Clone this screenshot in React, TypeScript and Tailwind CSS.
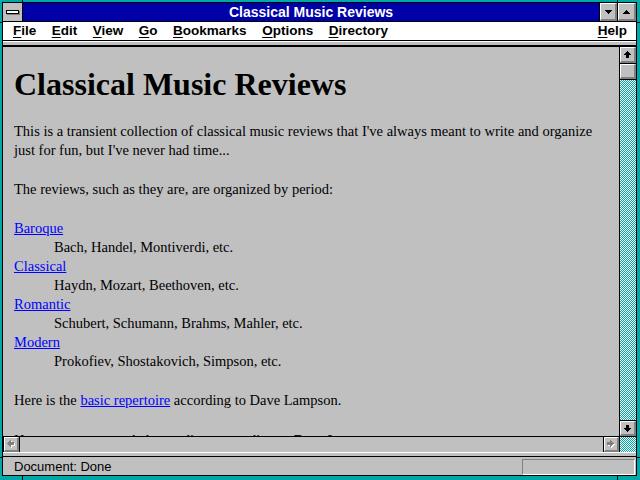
import React from "react";

function Bevel({ className = "", children }: { className?: string; children?: React.ReactNode }) {
  return (
    <div
      className={`flex items-center justify-center bg-[#c0c0c0] border-t border-l border-t-white border-l-white border-r-2 border-b-2 border-r-[#808080] border-b-[#808080] ${className}`}
    >
      {children}
    </div>
  );
}

function Px({ d, w = 7, h = 7, fill = "#000" }: { d: string; w?: number; h?: number; fill?: string }) {
  return (
    <svg width={w} height={h} viewBox={`0 0 ${w} ${h}`} shapeRendering="crispEdges" className="block">
      <path d={d} fill={fill} />
    </svg>
  );
}

function Disabled({ d }: { d: string }) {
  return (
    <svg width={8} height={8} viewBox="0 0 8 8" shapeRendering="crispEdges" className="block">
      <path d={d} fill="#ffffff" transform="translate(1,1)" />
      <path d={d} fill="#808080" />
    </svg>
  );
}

const dither =
  "bg-white bg-[image:conic-gradient(#00a8a8_25%,#ffffff_0_50%,#00a8a8_0_75%,#ffffff_0)] bg-[length:2px_2px]";

const UP = "M3 0H4V1H5V2H6V3H7V4H5V7H2V4H0V3H1V2H2V1H3Z";
const DOWN = "M2 0H5V3H7V4H6V5H5V6H4V7H3V6H2V5H1V4H0V3H2Z";
const LEFT = "M0 3V4H1V5H2V6H3V7H4V5H7V2H4V0H3V1H2V2H1V3Z";
const RIGHT = "M7 3V4H6V5H5V6H4V7H3V5H0V2H3V0H4V1H5V2H6V3Z";
const TRI_DOWN = "M0 0H7V1H6V2H5V3H4V4H3V3H2V2H1V1H0Z";
const TRI_UP = "M3 0H4V1H5V2H6V3H7V4H0V3H1V2H2V1H3Z";

function MenuItem({ first, rest }: { first: string; rest: string }) {
  return (
    <span>
      <span className="underline decoration-1 underline-offset-[2px]">{first}</span>
      {rest}
    </span>
  );
}

export default function App() {
  return (
    <div className="relative w-[640px] h-[480px] bg-[#00a8a8] pt-[2px] pl-[2px] pr-[3px] pb-[4px] overflow-hidden">
      {/* frame corner notches */}
      <div className="absolute left-[22px] top-0 w-px h-[2px] bg-black" />
      <div className="absolute left-[617px] top-0 w-px h-[2px] bg-black" />
      <div className="absolute left-[22px] bottom-0 w-px h-[4px] bg-black" />
      <div className="absolute left-[617px] bottom-0 w-px h-[4px] bg-black" />
      <div className="absolute left-0 top-[22px] w-[2px] h-px bg-black" />
      <div className="absolute right-0 top-[22px] w-[3px] h-px bg-black" />
      <div className="absolute left-0 top-[457px] w-[2px] h-px bg-black" />
      <div className="absolute right-0 top-[457px] w-[3px] h-px bg-black" />

      <div className="h-full border border-black flex flex-col bg-[#c0c0c0]">
        {/* Title bar */}
        <div className="h-[19px] shrink-0 flex border-b border-black">
          <div className="w-[20px] border-r border-black bg-[#c0c0c0] flex items-center justify-center">
            <div className="w-[13px] h-[4px] border border-black bg-white shadow-[1px_1px_0_#808080]" />
          </div>
          <div className="flex-1 bg-[#0000a8] text-white font-bold text-[14px] leading-none font-['Liberation_Sans',Arial,sans-serif] flex items-center justify-center">
            Classical Music Reviews
          </div>
          <div className="w-[18px] border-l border-black flex">
            <Bevel className="flex-1">
              <Px d={TRI_DOWN} w={7} h={4} />
            </Bevel>
          </div>
          <div className="w-[19px] border-l border-black flex">
            <Bevel className="flex-1">
              <Px d={TRI_UP} w={7} h={4} />
            </Bevel>
          </div>
        </div>

        {/* Menu bar */}
        <div className="h-[19px] shrink-0 bg-white border-b border-black flex items-center pl-[10px] pr-[9px] gap-[15.5px] font-['Liberation_Sans',Arial,sans-serif] font-bold text-[13.5px] leading-none text-black">
          <MenuItem first="F" rest="ile" />
          <MenuItem first="E" rest="dit" />
          <MenuItem first="V" rest="iew" />
          <MenuItem first="G" rest="o" />
          <MenuItem first="B" rest="ookmarks" />
          <MenuItem first="O" rest="ptions" />
          <MenuItem first="D" rest="irectory" />
          <span className="ml-auto">
            <MenuItem first="H" rest="elp" />
          </span>
        </div>

        {/* hidden toolbar separator */}
        <div className="h-[6px] shrink-0 border-t border-t-white bg-[#c0c0c0] border-b-2 border-b-black" />

        {/* Main area */}
        <div className="h-[405px] shrink-0 flex">
          <div className="flex-1 flex flex-col min-w-0">
            <div className="flex-1 overflow-hidden bg-[#c0c0c0] pl-[11px] pr-[10px] text-black font-['Liberation_Serif','Times_New_Roman',serif] text-[14.5px] leading-[19px]">
              <h1 className="mt-[19px] text-[32px] leading-[36px] font-bold">Classical Music Reviews</h1>
              <p className="mt-[20px]">
                This is a transient collection of classical music reviews that I've always meant to write and organize
                just for fun, but I've never had time...
              </p>
              <p className="mt-[20px]">The reviews, such as they are, are organized by period:</p>
              <div className="mt-[20px]">
                <div>
                  <a className="text-[#0000ff] underline">Baroque</a>
                </div>
                <div className="ml-[40px]">Bach, Handel, Montiverdi, etc.</div>
                <div>
                  <a className="text-[#0000ff] underline">Classical</a>
                </div>
                <div className="ml-[40px]">Haydn, Mozart, Beethoven, etc.</div>
                <div>
                  <a className="text-[#0000ff] underline">Romantic</a>
                </div>
                <div className="ml-[40px]">Schubert, Schumann, Brahms, Mahler, etc.</div>
                <div>
                  <a className="text-[#0000ff] underline">Modern</a>
                </div>
                <div className="ml-[40px]">Prokofiev, Shostakovich, Simpson, etc.</div>
              </div>
              <p className="mt-[20px]">
                Here is the <a className="text-[#0000ff] underline">basic repertoire</a> according to Dave Lampson.
              </p>
              <p className="mt-[21px]">Here are recommended recordings according to Dave Lampson.</p>
            </div>
            {/* horizontal scrollbar */}
            <div className="h-[16px] shrink-0 flex border-t border-black bg-[#c0c0c0]">
              <div className="w-[17px] border-l border-r border-black flex">
                <Bevel className="flex-1">
                  <Disabled d={LEFT} />
                </Bevel>
              </div>
              <div className="flex-1" />
              <div className="w-[16px] border-l border-black flex">
                <Bevel className="flex-1">
                  <Disabled d={RIGHT} />
                </Bevel>
              </div>
            </div>
          </div>
          {/* vertical scrollbar */}
          <div className="w-[17px] shrink-0 border-l border-black flex flex-col">
            <div className="h-[17px] border-b border-black flex">
              <Bevel className="flex-1">
                <Px d={UP} />
              </Bevel>
            </div>
            <div className="h-[16px] border-b border-black flex">
              <Bevel className="flex-1" />
            </div>
            <div className={`flex-1 min-h-0 ${dither}`} />
            <div className="h-[17px] border-t border-b border-black flex">
              <Bevel className="flex-1">
                <Px d={DOWN} />
              </Bevel>
            </div>
            <div className={`h-[15px] ${dither}`} />
          </div>
        </div>

        {/* status separator */}
        <div className="h-[5px] shrink-0 border-t border-t-white bg-[#c0c0c0] border-b border-b-black" />

        {/* Status bar */}
        <div className="h-[18px] shrink-0 flex items-start bg-[#c0c0c0] pl-[11px] pr-[1px] font-['Liberation_Sans',Arial,sans-serif] text-[13px] text-black">
          <div className="h-full flex items-center leading-none">Document: Done</div>
          <div className="ml-auto mt-[2px] w-[113px] h-[16px] border-t border-l border-t-[#808080] border-l-[#808080] border-b border-r border-b-white border-r-white" />
        </div>
      </div>
    </div>
  );
}
